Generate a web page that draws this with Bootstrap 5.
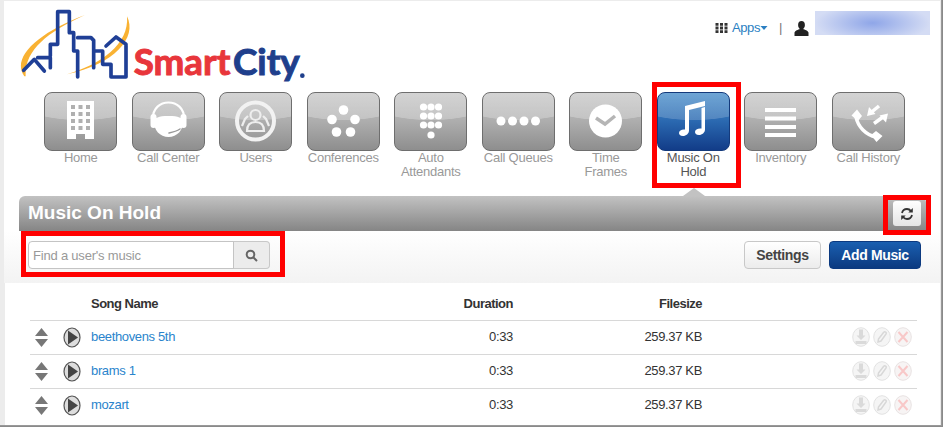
<!DOCTYPE html>
<html lang="en">
<head>
<meta charset="utf-8">
<title>Music On Hold</title>
<link href="https://cdn.jsdelivr.net/npm/bootstrap@5.3.0/dist/css/bootstrap.min.css" rel="stylesheet">
<style>
html,body{margin:0;height:427px;overflow:hidden;background:#f0f0f0;font-family:"Liberation Sans",Arial,sans-serif}
.app-frame{position:relative;width:943px;height:427px;padding:1px 2px 2px 4px;background:#ececec;border-right:1px solid #8a8a8a;border-bottom:1px solid #8a8a8a;box-shadow:inset -1px -1px 0 #999}
.top-area{background:#fff;height:230px;display:flex;flex-direction:column}
.head-row{height:91px}
.logo-svg{display:block;margin-left:11px;margin-top:4px}
.user-box{margin:10px 10px 0 0;font-size:13px;color:#2b7fc2;letter-spacing:-.4px;height:24px;align-items:flex-start}
.user-links{margin-top:10px;height:14px}
.user-blur{width:115px;height:24px;margin-left:6px;background:radial-gradient(ellipse 50% 80% at 50% 50%,#8fa6e8,#d4dcf4)}
.sep{color:#777;margin:0 12px 0 11px}
.tile-row{padding-left:33px;height:104px}
.tile-item{width:87.5px;flex:none;text-align:center;font-size:13px;line-height:14px;color:#999;letter-spacing:-.25px;position:relative}
.tile{display:block;width:73px;height:59px;margin:0 auto 0;border:1px solid #6e6e6e;border-radius:8px;background:radial-gradient(ellipse 110% 56% at 50% -8%,rgba(255,255,255,.26) 98%,rgba(255,255,255,0) 100%),linear-gradient(#c4c4c4,#adadad 50%,#8e8e8e)}
.tile svg{display:block;width:71px;height:57px}
.tile-label{display:block;padding:0 2px}
.tile-item.is-on{color:#555}
.tile-item.is-on .tile{border-color:#143a7c;background:radial-gradient(ellipse 110% 56% at 50% -8%,rgba(255,255,255,.18) 98%,rgba(255,255,255,0) 100%),linear-gradient(#4f92cc,#2a68b0 50%,#123c88)}
.pointer{position:absolute;left:33px;top:96px;width:0;height:0;border-left:11px solid transparent;border-right:11px solid transparent;border-bottom:8px solid #c2c2c2}
.title-bar{height:35px;margin:0 14px 0 15px;border-radius:6px 6px 0 0;background:linear-gradient(#c2c2c2,#858585);color:#fff;font-weight:700;font-size:19px;padding:0 5px 0 9px}
.refresh-btn{width:28px;height:25px;padding:0;border:0;border-radius:3px;background:linear-gradient(#fff,#e4e4e4);margin-top:5px;display:flex;align-items:center;justify-content:center}
.tool-row{height:52px;padding:10px 19px 0 24px;background:linear-gradient(#fff,#f3f3f3)}
.find-group{width:242px;height:28px}
.find-group .form-control{height:28px;font-size:13px;padding:0 4px;border-color:#c4c4c4;border-radius:4px 0 0 4px;letter-spacing:-.2px;min-height:0}
.find-group .form-control::placeholder{color:#999}
.find-btn{width:37px;height:28px;padding:0;border:1px solid #c8c8c8;border-left:0;border-radius:0 4px 4px 0;background:#ececec;display:flex;align-items:center;justify-content:center}
.act-btn{height:28px;padding:0;font-size:14px;font-weight:700;border-radius:4px;letter-spacing:-.35px}
.btn-plain{width:77px;background:linear-gradient(#fff,#ececec);border:1px solid #c8c8c8;color:#444}
.btn-main{width:92px;margin-left:8px;background:linear-gradient(#1a5fb0,#0c3a80);border:1px solid #0c3a80;color:#fff}
.song-card{background:#fff;margin-left:1px;height:142px;padding:0 24px 0 25px}
.song-table{width:887px;margin:0;font-size:13px;letter-spacing:-.35px;color:#333;border-collapse:collapse}
.song-table th,.song-table td{padding:0 0 2px;vertical-align:middle;border-bottom:1px solid #d8d8d8;height:34px;line-height:1}
.song-table th{height:37px;font-size:13px;color:#333;font-weight:700;letter-spacing:-.5px;padding:5px 0 0}
.song-table tr:last-child td{border-bottom:0}
.song-table a{color:#2a84cc;text-decoration:none}
.c-arrow{width:61px}
.c-name{width:300px}
.c-dur{width:122px;text-align:right}
.c-size{width:189px;text-align:right}
.c-act{text-align:right;padding-right:4px!important}
.arrow-svg{display:block;margin-left:5px}
.row-lead{display:flex;align-items:center;gap:15px;margin-top:2px}
.act-set{display:inline-flex;gap:3px;vertical-align:middle;margin-right:1px;margin-top:2px}
.mark-box{position:absolute;border:5px solid #f00;pointer-events:none}
.mb-music{left:652px;top:82px;width:89px;height:106px}
.mb-search{left:21px;top:231px;width:264px;height:46px}
.mb-refresh{left:883px;top:195px;width:48px;height:40px}
</style>
</head>
<body>
<div class="app-frame">
  <div class="top-area">
    <div class="head-row d-flex justify-content-between">
      <svg class="logo-svg" width="300" height="84" viewBox="42 12 900 252" role="img" aria-label="SmartCity">
        <path fill="#f9b233" d="M70 226C30 170 110 95 252 42C135 95 70 150 74 226Z"/>
        <path fill="#f9b233" d="M198 220C300 190 385 130 378 46C410 110 340 190 198 220Z"/>
        <g fill="none" stroke="#1f3f96" stroke-width="11" stroke-linejoin="round" stroke-linecap="round">
          <path d="M68 208L100 175L130 210"/>
          <path d="M110 170H148V200M148 165V130H170V32H205V95H218V150H230V228"/>
          <path d="M230 110H270L278 118V200M278 150H305V190H330V228H375V135"/>
          <path d="M315 135L345 108L375 130"/>
        </g>
        <text x="398" y="222" fill="#e8363b" stroke="#e8363b" stroke-width="3" font-family="Lato,'Liberation Sans',sans-serif" font-weight="700" font-size="108" textLength="290" lengthAdjust="spacingAndGlyphs">Smart</text>
        <text x="696" y="222" fill="#1f3f8c" stroke="#1f3f8c" stroke-width="3" font-family="Lato,'Liberation Sans',sans-serif" font-weight="700" font-size="108" textLength="200" lengthAdjust="spacingAndGlyphs">City</text>
        <circle cx="904" cy="224" r="7" fill="#1f3f8c"/>
      </svg>
      <div class="user-box d-flex">
        <div class="user-links d-flex align-items-center">
          <svg width="13" height="10" viewBox="0 0 12 10" class="me-1"><path fill="#333" d="M0 0h3v2.800H0zM4.500 0h3v2.800h-3zM9 0h3v2.800H9zM0 3.600h3v2.800H0zM4.500 3.600h3v2.800h-3zM9 3.600h3v2.800H9zM0 7.200h3V10H0zM4.500 7.200h3V10h-3zM9 7.200h3V10H9z"/></svg>
          <span>Apps</span>
          <svg width="8" height="4" viewBox="0 0 7 4" class="caret-svg"><path fill="#2b7fc2" d="M0 0h7L3.500 4z"/></svg>
          <span class="sep">|</span>
          <svg width="15" height="15" viewBox="0 0 15 15"><path fill="#222" d="M7.500 0c2.200 0 3.400 1.700 3.400 3.900 0 2-1 3.400-1.900 4 1.800.8 5 1.300 5.500 3.700V15H.500v-3.400c.5-2.400 3.700-2.900 5.500-3.700-.9-.6-1.900-2-1.900-4C4.100 1.700 5.300 0 7.500 0z"/></svg>
        </div>
        <span class="user-blur"></span>
      </div>
    </div>
    <nav class="tile-row d-flex">
      <div class="tile-item"><span class="tile"><svg viewBox="0 0 71 57"><path fill="#fff" d="M22 8h27v38h-9v-5h-9v5h-9z"/><path fill="#b0b0b0" d="M26 12h4v4h-4zM33.500 12h4v4h-4zM41 12h4v4h-4zM26 19h4v4h-4zM33.500 19h4v4h-4zM41 19h4v4h-4zM26 26h4v4h-4zM33.500 26h4v4h-4zM41 26h4v4h-4zM26 33h4v4h-4zM33.500 33h4v4h-4zM41 33h4v4h-4z"/></svg></span><span class="tile-label">Home</span></div>
      <div class="tile-item"><span class="tile"><svg viewBox="0 0 71 57"><path fill="none" stroke="#fff" stroke-width="2.200" d="M20 26C19 4 52 4 51 26"/><path fill="#fff" d="M21 28c1-3 4-5 14.500-5S49 25 50 28c.5 9-6 16-14.500 16S20.500 37 21 28z"/><rect x="17.500" y="21" width="6" height="14" rx="3" fill="#fff"/><rect x="47.500" y="21" width="6" height="14" rx="3" fill="#fff"/><path fill="none" stroke="#999" stroke-width="1.500" stroke-linecap="round" d="M47 36C44 38 41 39 36 40"/></svg></span><span class="tile-label">Call Center</span></div>
      <div class="tile-item"><span class="tile"><svg viewBox="0 0 71 57"><circle cx="35.500" cy="28" r="18.500" fill="none" stroke="#f2f2f2" stroke-width="4"/><g fill="none" stroke="#eee" stroke-width="2.200"><circle cx="35.500" cy="22" r="5"/><path d="M27 38C27 31 31 29 35.500 29S44 31 44 38ZM22 33l3-7 3-3M49 33l-3-7-3-3"/></g></svg></span><span class="tile-label">Users</span></div>
      <div class="tile-item"><span class="tile"><svg viewBox="0 0 71 57" fill="#fff"><circle cx="35.500" cy="17" r="4.800"/><circle cx="24" cy="26.500" r="4.800"/><circle cx="47" cy="26.500" r="4.800"/><circle cx="28.500" cy="39" r="4.800"/><circle cx="42.500" cy="39" r="4.800"/></svg></span><span class="tile-label">Conferences</span></div>
      <div class="tile-item"><span class="tile"><svg viewBox="0 0 71 57" fill="#fff"><circle cx="28.500" cy="14" r="3.600"/><circle cx="36" cy="14" r="3.600"/><circle cx="43.500" cy="14" r="3.600"/><circle cx="28.500" cy="23" r="3.600"/><circle cx="36" cy="23" r="3.600"/><circle cx="43.500" cy="23" r="3.600"/><circle cx="28.500" cy="32" r="3.600"/><circle cx="36" cy="32" r="3.600"/><circle cx="43.500" cy="32" r="3.600"/><circle cx="36" cy="42" r="3.600"/></svg></span><span class="tile-label">Auto<br>Attendants</span></div>
      <div class="tile-item"><span class="tile"><svg viewBox="0 0 71 57" fill="#fff"><circle cx="18" cy="28" r="4.500"/><circle cx="29.500" cy="28" r="4.500"/><circle cx="41" cy="28" r="4.500"/><circle cx="52.500" cy="28" r="4.500"/></svg></span><span class="tile-label">Call Queues</span></div>
      <div class="tile-item"><span class="tile"><svg viewBox="0 0 71 57"><circle cx="35.500" cy="28" r="16.500" fill="#fff"/><path fill="none" stroke="#b5b5b5" stroke-width="3.500" d="M26 25l9 6 10-8"/></svg></span><span class="tile-label">Time<br>Frames</span></div>
      <div class="tile-item is-on"><span class="tile"><svg viewBox="0 0 71 57" fill="#fff"><path d="M27 13L47 8v5L31 17v20.500c0 3-3 5.500-6 5.500s-4-1.500-4-3c0-2.500 3-4 6-3.500zM43.500 15l3.500-1v22.500c0 3-3 5.500-6 5.500s-4-1.500-4-3c0-2.500 3-4 6.500-3.500z"/></svg></span><span class="tile-label">Music On<br>Hold</span><span class="pointer"></span></div>
      <div class="tile-item"><span class="tile"><svg viewBox="0 0 71 57" fill="#fff"><path d="M20 15h31v4H20zM20 23.500h31v4H20zM20 32h31v4H20zM20 40h31v4H20z"/></svg></span><span class="tile-label">Inventory</span></div>
      <div class="tile-item"><span class="tile"><svg viewBox="0 0 71 57"><path fill="none" stroke="#fff" stroke-width="3.500" d="M23 24C25 34 33 42 43 44"/><path fill="#fff" d="M18.500 22.500L24 16.500l5 6.500-4 5zM38 42l5-4 6.500 5-6 6z"/><g stroke="#fff" stroke-width="3.500" fill="#fff"><path d="M46 13L38 19.500"/><path d="M41 30.500L50 24"/></g><path fill="#fff" d="M34 23l2-9 6.500 7zM55 20.500l-2 9-6.500-7z"/></svg></span><span class="tile-label">Call History</span></div>
    </nav>
    <div class="title-bar d-flex justify-content-between align-items-center flex-shrink-0">
      <span>Music On Hold</span>
      <button class="refresh-btn align-self-start" type="button" aria-label="Refresh"><svg width="14" height="14" viewBox="0 0 14 14" fill="none" stroke="#333" stroke-width="1.800"><path d="M2 6C2.600 3.400 4.600 2 7 2c1.700 0 3 .8 4 2"/><path d="M12 8c-.6 2.600-2.600 4-5 4-1.700 0-3-.8-4-2"/><path fill="#333" stroke="none" d="M12.800 1v4.500H8.300zM1.200 13V8.500h4.500z"/></svg></button>
    </div>
  </div>
  <div class="tool-row d-flex justify-content-between">
    <div class="find-group input-group flex-nowrap">
      <input class="form-control" type="text" placeholder="Find a user's music">
      <button class="find-btn" type="button" aria-label="Search"><svg width="13" height="13" viewBox="0 0 13 13" fill="none" stroke="#666" stroke-width="2"><circle cx="5.500" cy="5.500" r="3.800"/><path d="M8.500 8.500L12 12"/></svg></button>
    </div>
    <div class="d-flex">
      <button class="btn act-btn btn-plain" type="button">Settings</button>
      <button class="btn act-btn btn-main" type="button">Add Music</button>
    </div>
  </div>
  <div class="song-card">
    <table class="song-table">
      <thead><tr><th class="c-arrow"></th><th class="c-name">Song Name</th><th class="c-dur">Duration</th><th class="c-size">Filesize</th><th></th></tr></thead>
      <tbody>
        <tr>
          <td><div class="row-lead"><svg class="arrow-svg" width="13" height="19" viewBox="0 0 13 19" fill="#777"><path d="M6.500 0L13 8H0zM0 11h13L6.500 19z"/></svg><svg width="18" height="21" viewBox="0 0 18 21"><ellipse cx="9" cy="10.500" rx="8" ry="9.500" fill="#ddd" stroke="#555" stroke-width="1.200"/><path fill="#444" d="M5 3.500l10 7-10 7z"/></svg></div></td>
          <td><a href="#">beethovens 5th</a></td><td class="c-dur">0:33</td><td class="c-size">259.37 KB</td>
          <td class="c-act"><span class="act-set"><svg width="18" height="20" viewBox="0 0 18 20"><ellipse cx="9" cy="10" rx="8.300" ry="9.300" fill="#f5f5f5" stroke="#e2e2e2"/><path fill="#dadada" d="M7 2.500h4v6h2.500L9 13 4.500 8.500H7zM3.500 14h11v3h-11z"/></svg><svg width="18" height="20" viewBox="0 0 18 20"><ellipse cx="9" cy="10" rx="8.300" ry="9.300" fill="#f5f5f5" stroke="#e2e2e2"/><path fill="none" stroke="#d8d8d8" stroke-width="1.500" d="M5.500 12L10.500 5.500c1.500-1.500 3.500 0 2.500 1.500L8 14l-3 1z"/></svg><svg width="18" height="20" viewBox="0 0 18 20"><ellipse cx="9" cy="10" rx="8.300" ry="9.300" fill="#f7f4f4" stroke="#e8e2e2"/><path fill="none" stroke="#f8c8c8" stroke-width="2" d="M4.500 5l9 10M13.500 5l-9 10"/></svg></span></td>
        </tr>
        <tr>
          <td><div class="row-lead"><svg class="arrow-svg" width="13" height="19" viewBox="0 0 13 19" fill="#777"><path d="M6.500 0L13 8H0zM0 11h13L6.500 19z"/></svg><svg width="18" height="21" viewBox="0 0 18 21"><ellipse cx="9" cy="10.500" rx="8" ry="9.500" fill="#ddd" stroke="#555" stroke-width="1.200"/><path fill="#444" d="M5 3.500l10 7-10 7z"/></svg></div></td>
          <td><a href="#">brams 1</a></td><td class="c-dur">0:33</td><td class="c-size">259.37 KB</td>
          <td class="c-act"><span class="act-set"><svg width="18" height="20" viewBox="0 0 18 20"><ellipse cx="9" cy="10" rx="8.300" ry="9.300" fill="#f5f5f5" stroke="#e2e2e2"/><path fill="#dadada" d="M7 2.500h4v6h2.500L9 13 4.500 8.500H7zM3.500 14h11v3h-11z"/></svg><svg width="18" height="20" viewBox="0 0 18 20"><ellipse cx="9" cy="10" rx="8.300" ry="9.300" fill="#f5f5f5" stroke="#e2e2e2"/><path fill="none" stroke="#d8d8d8" stroke-width="1.500" d="M5.500 12L10.500 5.500c1.500-1.500 3.500 0 2.500 1.500L8 14l-3 1z"/></svg><svg width="18" height="20" viewBox="0 0 18 20"><ellipse cx="9" cy="10" rx="8.300" ry="9.300" fill="#f7f4f4" stroke="#e8e2e2"/><path fill="none" stroke="#f8c8c8" stroke-width="2" d="M4.500 5l9 10M13.500 5l-9 10"/></svg></span></td>
        </tr>
        <tr>
          <td><div class="row-lead"><svg class="arrow-svg" width="13" height="19" viewBox="0 0 13 19" fill="#777"><path d="M6.500 0L13 8H0zM0 11h13L6.500 19z"/></svg><svg width="18" height="21" viewBox="0 0 18 21"><ellipse cx="9" cy="10.500" rx="8" ry="9.500" fill="#ddd" stroke="#555" stroke-width="1.200"/><path fill="#444" d="M5 3.500l10 7-10 7z"/></svg></div></td>
          <td><a href="#">mozart</a></td><td class="c-dur">0:33</td><td class="c-size">259.37 KB</td>
          <td class="c-act"><span class="act-set"><svg width="18" height="20" viewBox="0 0 18 20"><ellipse cx="9" cy="10" rx="8.300" ry="9.300" fill="#f5f5f5" stroke="#e2e2e2"/><path fill="#dadada" d="M7 2.500h4v6h2.500L9 13 4.500 8.500H7zM3.500 14h11v3h-11z"/></svg><svg width="18" height="20" viewBox="0 0 18 20"><ellipse cx="9" cy="10" rx="8.300" ry="9.300" fill="#f5f5f5" stroke="#e2e2e2"/><path fill="none" stroke="#d8d8d8" stroke-width="1.500" d="M5.500 12L10.500 5.500c1.500-1.500 3.500 0 2.500 1.500L8 14l-3 1z"/></svg><svg width="18" height="20" viewBox="0 0 18 20"><ellipse cx="9" cy="10" rx="8.300" ry="9.300" fill="#f7f4f4" stroke="#e8e2e2"/><path fill="none" stroke="#f8c8c8" stroke-width="2" d="M4.500 5l9 10M13.500 5l-9 10"/></svg></span></td>
        </tr>
      </tbody>
    </table>
  </div>
  <div class="mark-box mb-music"></div>
  <div class="mark-box mb-search"></div>
  <div class="mark-box mb-refresh"></div>
</div>
<script src="https://cdn.jsdelivr.net/npm/bootstrap@5.3.0/dist/js/bootstrap.bundle.min.js"></script>
</body>
</html>
